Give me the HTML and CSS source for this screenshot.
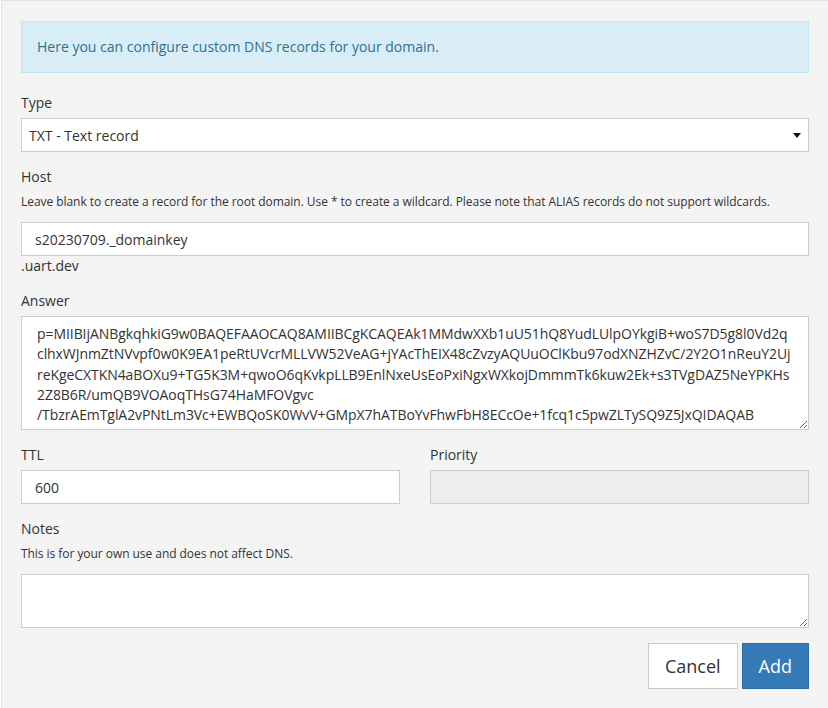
FILE: index.html
```html
<!DOCTYPE html>
<html>
<head>
<meta charset="utf-8">
<link rel="stylesheet" href="styles.css">
</head>
<body>
<div class="panel">
  <div class="alert">Here you can configure custom DNS records for your domain.</div>

  <div class="form-group">
    <label class="label">Type</label>
    <div class="select-wrap">
      <div class="select">TXT - Text record</div>
      <svg class="caret" width="8" height="5" viewBox="0 0 8 5"><path d="M0 0H8L4 5Z" fill="#111"/></svg>
    </div>
  </div>

  <div class="form-group">
    <label class="label">Host</label>
    <p class="help">Leave blank to create a record for the root domain. Use * to create a wildcard. Please note that ALIAS records do not support wildcards.</p>
    <input class="input" type="text" value="s20230709._domainkey">
    <div class="suffix">.uart.dev</div>
  </div>

  <div class="form-group">
    <label class="label">Answer</label>
    <textarea class="textarea answer">p=MIIBIjANBgkqhkiG9w0BAQEFAAOCAQ8AMIIBCgKCAQEAk1MMdwXXb1uU51hQ8YudLUlpOYkgiB+woS7D5g8l0Vd2q
clhxWJnmZtNVvpf0w0K9EA1peRtUVcrMLLVW52VeAG+jYAcThEIX48cZvzyAQUuOClKbu97odXNZHZvC/2Y2O1nReuY2Uj
reKgeCXTKN4aBOXu9+TG5K3M+qwoO6qKvkpLLB9EnlNxeUsEoPxiNgxWXkojDmmmTk6kuw2Ek+s3TVgDAZ5NeYPKHs
2Z8B6R/umQB9VOAoqTHsG74HaMFOVgvc
/TbzrAEmTglA2vPNtLm3Vc+EWBQoSK0WvV+GMpX7hATBoYvFhwFbH8ECcOe+1fcq1c5pwZLTySQ9Z5JxQIDAQAB</textarea>
  </div>

  <div class="row">
    <div class="form-group">
      <label class="label">TTL</label>
      <input class="input" type="text" value="600">
    </div>
    <div class="form-group">
      <label class="label">Priority</label>
      <input class="input" type="text" value="" disabled>
    </div>
  </div>

  <div class="form-group">
    <label class="label">Notes</label>
    <p class="help">This is for your own use and does not affect DNS.</p>
    <textarea class="textarea notes"></textarea>
  </div>

  <div class="actions">
    <button class="btn btn-default">Cancel</button>
    <button class="btn btn-primary">Add</button>
  </div>
</div>
</body>
</html>
```

FILE: styles.css
```css
* { box-sizing: border-box; }
html, body { margin: 0; padding: 0; background: #ffffff; }
body {
  font-family: "Open Sans", "Liberation Sans", sans-serif;
  font-size: 14px;
  line-height: 20px;
  color: #333333;
}
.panel {
  margin-left: 1px;
  width: 827px;
  height: 708px;
  background: #f4f4f4;
  border-left: 1px solid #e2e2e2;
  border-top: 1px solid #e2e2e2;
  padding: 20px 19px 0 19px;
}
.alert {
  background: #d9edf7;
  border: 1px solid #bce8f1;
  color: #31708f;
  padding: 15px 15px;
  line-height: 20px;
  margin-bottom: 20px;
}
.form-group { margin-bottom: 15px; }
.label {
  display: block;
  margin-bottom: 5px;
  line-height: 20px;
}
.help {
  margin: 0 0 10px 0;
  font-size: 12px;
  line-height: 20px;
  letter-spacing: -0.05px;
  color: #333333;
}
.select-wrap { position: relative; }
.select {
  height: 34px;
  background: #ffffff;
  border: 1px solid #cccccc;
  padding: 7px 7px 5px 7px;
  line-height: 20px;
}
.caret {
  position: absolute;
  right: 8px;
  top: 15px;
}
.input {
  display: block;
  width: 100%;
  height: 34px;
  background: #ffffff;
  border: 1px solid #cccccc;
  border-radius: 0;
  padding: 6px 13px;
  font-family: inherit;
  font-size: 14px;
  line-height: 20px;
  color: #333333;
  outline: none;
  margin: 0;
}
.input:disabled { background: #eeeeee; }
.suffix { line-height: 20px; }
.textarea {
  display: block;
  width: 100%;
  background: #ffffff;
  border: 1px solid #cccccc;
  border-radius: 0;
  padding: 6px 15px;
  font-family: inherit;
  font-size: 14px;
  line-height: 20.35px;
  color: #333333;
  outline: none;
  margin: 0;
  resize: vertical;
}
.answer {
  height: 114px;
  padding-top: 7px;
  padding-bottom: 0;
  white-space: pre;
  overflow: hidden;
  letter-spacing: -0.07px;
}
.notes { height: 54px; }
.row {
  display: grid;
  grid-template-columns: 1fr 1fr;
  column-gap: 30px;
}
.actions {
  display: flex;
  justify-content: flex-end;
  gap: 4px;
}
.btn {
  height: 46px;
  padding: 10px 16px;
  font-family: inherit;
  font-size: 18px;
  line-height: 24px;
  border: 1px solid #cccccc;
  border-radius: 0;
  cursor: pointer;
}
.btn-default { background: #ffffff; color: #333333; }
.btn-primary { background: #337ab7; border-color: #2e6da4; color: #ffffff; }
```
